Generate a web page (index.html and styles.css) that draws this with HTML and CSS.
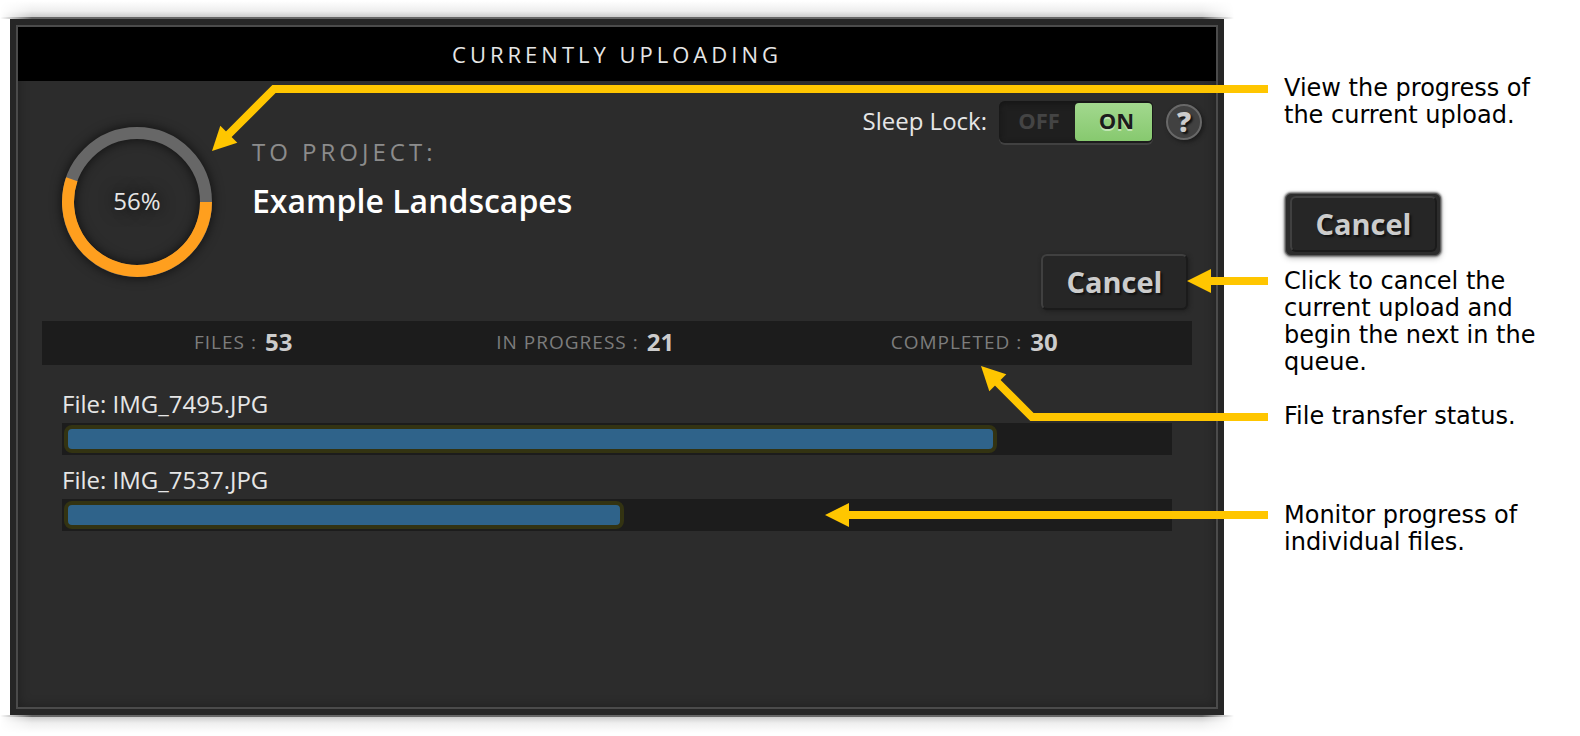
FILE: index.html
```html
<!DOCTYPE html>
<html lang="en">
<head>
<meta charset="utf-8">
<title>Currently Uploading</title>
<link rel="stylesheet" href="styles.css">
</head>
<body>
<main class="guide">
  <section class="panel">
    <div class="panel-inner">
      <h1 class="panel-title">CURRENTLY UPLOADING</h1>
      <div class="summary">
        <div class="ring">
          <svg class="ring-art" viewBox="0 0 150 150" aria-hidden="true">
            <circle cx="75" cy="75" r="69" fill="none" stroke="#676767" stroke-width="12"/>
            <path d="M144 75A69 69 0 1 1 9.8 52.3" fill="none" stroke="#ff9f1e" stroke-width="12"/>
          </svg>
          <span class="ring-value">56%</span>
        </div>
        <div class="project">
          <p class="project-label">TO PROJECT:</p>
          <h2 class="project-name">Example Landscapes</h2>
        </div>
        <div class="controls">
          <div class="sleep">
            <label class="sleep-label" for="sleep-lock">Sleep Lock:</label>
            <span class="toggle">
              <input class="toggle-input" type="checkbox" id="sleep-lock" checked>
              <span class="toggle-off">OFF</span>
              <span class="toggle-on">ON</span>
            </span>
            <button class="help" type="button">?</button>
          </div>
          <button class="cancel" type="button">Cancel</button>
        </div>
      </div>
      <dl class="stats">
        <div class="stat"><dt>FILES :</dt><dd>53</dd></div>
        <div class="stat"><dt>IN PROGRESS :</dt><dd>21</dd></div>
        <div class="stat"><dt>COMPLETED :</dt><dd>30</dd></div>
      </dl>
      <ul class="files">
        <li class="file">
          <span class="file-name" id="file-a">File: IMG_7495.JPG</span>
          <div class="track" role="progressbar" aria-labelledby="file-a" aria-valuenow="84"><div class="fill" style="width:84.4%"></div></div>
        </li>
        <li class="file">
          <span class="file-name" id="file-b">File: IMG_7537.JPG</span>
          <div class="track" role="progressbar" aria-labelledby="file-b" aria-valuenow="51"><div class="fill" style="width:50.6%"></div></div>
        </li>
      </ul>
    </div>
  </section>
  <aside class="notes">
    <p class="note note-view">View the progress of the current upload.</p>
    <div class="cancel-frame"><button class="cancel" type="button">Cancel</button></div>
    <p class="note note-cancel">Click to cancel the current upload and begin the next in the queue.</p>
    <p class="note note-status">File transfer status.</p>
    <p class="note note-monitor">Monitor progress of individual files.</p>
  </aside>
  <svg class="arrows" width="1580" height="736" viewBox="0 0 1580 736" aria-hidden="true">
    <g fill="none" stroke="#ffc600" stroke-width="8">
      <path d="M1268 89H274L226 137"/>
      <path d="M1268 281H1208"/>
      <path d="M1268 417H1032L994 379"/>
      <path d="M1268 515H846"/>
    </g>
    <g fill="#ffc600">
      <path d="M212 151L220.300 125.700L237.300 142.700Z"/>
      <path d="M1187 281L1211 269V293Z"/>
      <path d="M981 366L1006.300 374.300L989.300 391.300Z"/>
      <path d="M825 515L849 503V527Z"/>
    </g>
  </svg>
</main>
</body>
</html>
```
FILE: styles.css
```css
* { box-sizing: border-box; }

body {
  margin: 0;
  background: #fff;
  color: #e6e6e6;
  font-family: "Open Sans", "Noto Sans", sans-serif;
  font-size: 24px;
}

h1, h2, p, dl, dd, ul { margin: 0; padding: 0; }
button { font-family: inherit; }

.guide {
  position: relative;
  display: grid;
  grid-template-columns: 1fr 264px;
  column-gap: 60px;
  min-height: 100vh;
  padding: 19px 32px 21px 10px;
  overflow: hidden;
}

/* Panel */
.panel {
  position: relative;
  display: flex;
  padding: 6px;
  background: #262626;
}

.panel::before,
.panel::after {
  content: "";
  position: absolute;
  left: -10px;
  right: -10px;
  height: 18px;
  mask-image: linear-gradient(90deg, transparent, #000 32px, #000 calc(100% - 32px), transparent);
}

.panel::before {
  bottom: 100%;
  background: linear-gradient(0deg, #666 2px, #ccc 2px, #eee 8px, #fff 18px);
}

.panel::after {
  top: 100%;
  background: linear-gradient(180deg, #666 2px, #ccc 2px, #eee 8px, #fff 18px);
}

.panel-inner {
  flex: 1;
  border: 2px solid #4b4b4b;
  background: #2c2c2c;
  box-shadow: inset 0 0 12px rgba(0, 0, 0, 0.3);
}

.panel-title {
  background: #000;
  font-size: 22px;
  font-weight: 400;
  line-height: 54px;
  letter-spacing: 4px;
  text-align: center;
}

.summary {
  display: grid;
  grid-template-columns: 150px 1fr auto;
  column-gap: 40px;
  height: 240px;
  padding: 20px 14px 11px 44px;
}

.ring {
  display: grid;
  place-items: center;
  width: 150px;
  height: 150px;
  margin-top: 26px;
}

.ring-art, .ring-value { grid-area: 1 / 1; }

.ring-art {
  width: 150px;
  height: 150px;
  overflow: visible;
  filter: drop-shadow(0 0 6px rgba(0, 0, 0, 0.7));
}

.ring-value {
  padding-bottom: 4px;
  text-shadow: 0 0 16px #000;
}

.project { padding-top: 33px; }

.project-label {
  color: #8c8c8c;
  line-height: 36px;
  letter-spacing: 4px;
}

.project-name {
  margin-top: 8px;
  color: #fff;
  font-size: 32px;
  font-weight: 600;
  line-height: 46px;
}

.controls {
  display: flex;
  flex-direction: column;
  justify-content: space-between;
  align-items: flex-end;
}

.sleep {
  display: flex;
  align-items: center;
  height: 42px;
}

.sleep-label {
  margin-right: 12px;
  padding-bottom: 4px;
}

.toggle {
  position: relative;
  display: grid;
  grid-template-columns: 76px 78px;
  height: 42px;
  padding: 2px 0;
  border-radius: 6px;
  background: #1f1f1f;
  box-shadow: inset 0 2px 6px #141414, 0 2px 0 #414141;
  font-size: 22px;
  font-weight: 700;
  line-height: 34px;
  text-align: center;
}

.toggle-input {
  position: absolute;
  inset: 0;
  width: 100%;
  height: 100%;
  margin: 0;
  opacity: 0;
}

.toggle-off { padding-left: 4px; color: #444; }

.toggle-on {
  height: 38px;
  margin-right: 1px;
  padding-left: 6px;
  border-radius: 4px;
  background: linear-gradient(#a2d88e, #87c96f);
  color: #1c1c1c;
  text-shadow: 0 2px 0 #c2e6b4;
}

.help {
  width: 36px;
  height: 36px;
  margin-left: 13px;
  padding: 0 0 2px;
  border: 2px solid #686868;
  border-radius: 50%;
  background: #414141;
  box-shadow: 2px 2px 4px #1a1a1a;
  color: #ccc;
  font-size: 28px;
  font-weight: 800;
  line-height: 30px;
  text-shadow: 2px 2px 2px #111;
}

.cancel {
  width: 147px;
  height: 56px;
  padding: 0 0 2px;
  border: 2px solid;
  border-color: #404040 #1b1b1b #1b1b1b #404040;
  border-radius: 6px;
  background: #262626;
  color: #ccc;
  font-size: 29px;
  font-weight: 700;
  text-shadow: 2px 2px 2px #111;
}

.controls .cancel {
  margin-right: 14px;
  box-shadow: 1px 1px 4px #1e1e1e;
}

/* Totals */
.stats {
  display: grid;
  grid-template-columns: 302fr 394fr 301fr;
  height: 44px;
  margin: 0 24px;
  padding-left: 152px;
  background: #1c1c1c;
  line-height: 42px;
}

.stat { display: flex; gap: 8px; }

.stat dt {
  color: #7d7d7d;
  font-size: 19px;
  letter-spacing: 1px;
}

.stat dd { color: #ccc; font-weight: 700; }

/* File list */
.files {
  display: grid;
  gap: 8px;
  padding: 22px 44px;
  list-style: none;
}

.file { display: grid; gap: 2px; }
.file-name { line-height: 34px; }

.track {
  height: 32px;
  padding: 2px;
  background: #1c1c1c;
}

.fill {
  height: 28px;
  border: 4px solid #333312;
  border-radius: 8px;
  background: #2f638a;
}

/* Side notes */
.notes {
  padding-top: 56px;
  color: #000;
  font-family: Verdana, "DejaVu Sans", sans-serif;
  line-height: 27px;
}

.cancel-frame {
  width: 156px;
  margin: 64px 0 0 1px;
  padding: 2px 3px 3px 4px;
  border: 1px solid #5c5c5c;
  border-radius: 6px;
  background: #2c2c2c;
  box-shadow: 0 0 2px 1px #777, 0 2px 6px #bbb;
  font-family: "Open Sans", "Noto Sans", sans-serif;
}

.note-cancel { margin-top: 12px; }
.note-status { margin-top: 27px; }
.note-monitor { margin-top: 72px; }

/* Callout arrows over the panel */
.arrows {
  position: absolute;
  top: 0;
  right: 0;
  pointer-events: none;
}
```
